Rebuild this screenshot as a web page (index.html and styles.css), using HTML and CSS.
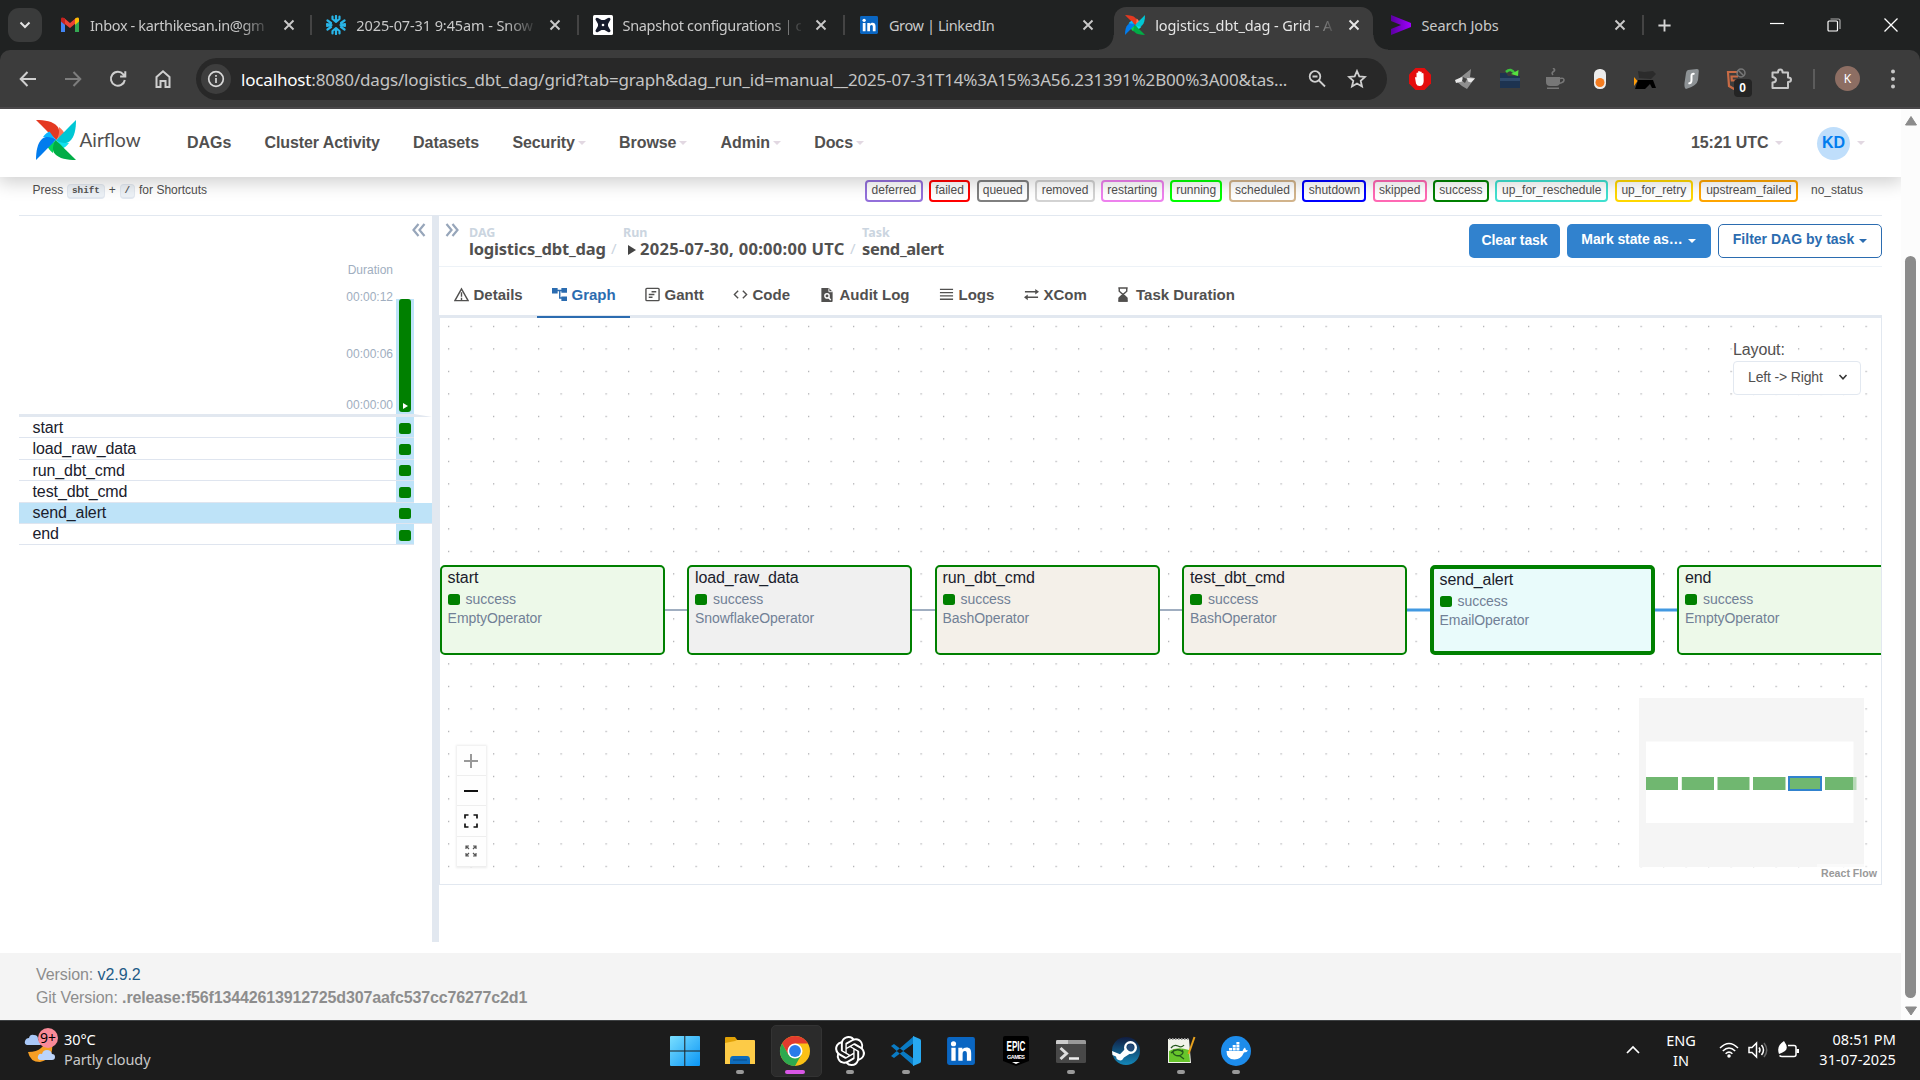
FILE: index.html
```html
<!DOCTYPE html>
<html lang="en">
<head>
<meta charset="utf-8">
<title>logistics_dbt_dag - Grid - Airflow</title>
<link rel="stylesheet" href="styles.css">
</head>
<body>
<svg class="defs" width="0" height="0" aria-hidden="true">
  <symbol id="pinwheel" viewBox="0 0 40 40">
    <g><path fill="#ff7557" d="M20 20L23 7C26 9 28 12 28.500 13.500C25 16 22 18 20 20Z"/><path fill="#e43921" d="M0 0C9 0 17 1.500 21 6C24.500 10 23 15 20.500 20C15 15 8 8 0 0Z"/></g>
    <g transform="rotate(90 20 20)"><path fill="#11e1ee" d="M20 20L23 7C26 9 28 12 28.500 13.500C25 16 22 18 20 20Z"/><path fill="#00c7d4" d="M0 0C9 0 17 1.500 21 6C24.500 10 23 15 20.500 20C15 15 8 8 0 0Z"/></g>
    <g transform="rotate(180 20 20)"><path fill="#04d659" d="M20 20L23 7C26 9 28 12 28.500 13.500C25 16 22 18 20 20Z"/><path fill="#00ad46" d="M0 0C9 0 17 1.500 21 6C24.500 10 23 15 20.500 20C15 15 8 8 0 0Z"/></g>
    <g transform="rotate(270 20 20)"><path fill="#0cb6ff" d="M20 20L23 7C26 9 28 12 28.500 13.500C25 16 22 18 20 20Z"/><path fill="#017cee" d="M0 0C9 0 17 1.500 21 6C24.500 10 23 15 20.500 20C15 15 8 8 0 0Z"/></g>
  </symbol>
  <symbol id="close" viewBox="0 0 20 20"><path d="M5.500 5.500l9 9M14.500 5.500l-9 9" stroke="currentColor" stroke-width="1.900" fill="none"/></symbol>
  <symbol id="linkedin" viewBox="0 0 26 26"><rect width="26" height="26" rx="2" fill="#0a66c2"/><circle cx="6" cy="6.200" r="2.400" fill="#fff"/><path fill="#fff" d="M4 10h4v12H4zM10.500 10h3.800v1.700c.7-1.200 2-2 3.800-2 3.300 0 4.400 2 4.400 5.300v7h-4v-6.300c0-1.600-.4-2.700-1.900-2.700-1.500 0-2.100 1.100-2.100 2.700V22h-4z"/></symbol>
</svg>

<header class="browser">
  <div class="tabstrip">
    <button class="tabsearch"><svg width="12" height="12" viewBox="0 0 12 12"><path d="M1.500 3.500L6 8l4.500-4.500" fill="none" stroke="#e3e3e3" stroke-width="2"/></svg></button>
    <div class="tab">
      <svg class="fav" viewBox="0 0 20 20"><path fill="#4285f4" d="M1 4v13h4V8z"/><path fill="#34a853" d="M19 4v13h-4V8z"/><path fill="#ea4335" d="M1 5l3-2 6 5 6-5 0 5-6 5-9-7z"/><path fill="#c5221f" d="M1 4c0-2 2-2 4-.300V10L1 6.500z"/><path fill="#fbbc04" d="M19 4c0-2-2-2-4-.300V10l4-3.500z"/></svg>
      <span class="title fade tight">Inbox - karthikesan.in@gm</span><svg class="x"><use href="#close"/></svg>
    </div>
    <div class="tab">
      <svg class="fav" viewBox="0 0 20 20" fill="none" stroke="#29b5e8" stroke-width="2.200" stroke-linecap="round" stroke-linejoin="round"><path d="M10 1v4.500M6.500 1.500V4L10 6.800 13.500 4V1.500M10 19v-4.500M6.500 18.500V16l3.500-2.800 3.500 2.800v2.500M1.500 5.500L5 8M1.500 14.500L5 12M18.500 5.500L15 8M18.500 14.500L15 12M1 9.200l4.500.800L1 10.800M19 9.200l-4.500.800 4.500.800"/></svg>
      <span class="title fade">2025-07-31 9:45am - Snow</span><svg class="x"><use href="#close"/></svg>
    </div>
    <div class="tab">
      <svg class="fav" viewBox="0 0 20 20"><rect width="20" height="20" rx="1.500" fill="#fff"/><path fill="#161b2c" d="M2.500 4.500Q2.500 2 5 3l3.500 2h3L15 3q2.500-1 2.500 1.500L15 9v2l2.500 4.500Q17.500 18 15 17l-3.500-2h-3L5 17q-2.500 1-2.500-1.500L5 11V9z"/><circle cx="10" cy="10" r="1.300" fill="#fff"/></svg>
      <span class="title fade tight">Snapshot configurations | c</span><svg class="x"><use href="#close"/></svg>
    </div>
    <div class="tab nosep">
      <svg class="fav sm"><use href="#linkedin"/></svg>
      <span class="title tight">Grow | LinkedIn</span><svg class="x"><use href="#close"/></svg>
    </div>
    <div class="tab active">
      <svg class="fav"><use href="#pinwheel"/></svg>
      <span class="title fade">logistics_dbt_dag - Grid - A</span><svg class="x"><use href="#close"/></svg>
    </div>
    <div class="tab">
      <svg class="fav" viewBox="0 0 20 20"><defs><linearGradient id="acc"><stop offset="0" stop-color="#5a00a0"/><stop offset="1" stop-color="#a100ff"/></linearGradient></defs><path fill="url(#acc)" d="M0 0l20 8v4L0 20v-6l10-4L0 6z"/></svg>
      <span class="title">Search Jobs</span><svg class="x"><use href="#close"/></svg>
    </div>
    <svg class="newtab" viewBox="0 0 16 16"><path d="M8 1.500v13M1.500 8h13" stroke="#d5d5d5" stroke-width="2"/></svg>
    <div class="winctl">
      <svg width="14" height="14"><path d="M0 5.500h14" stroke="#fff" stroke-width="1.200"/></svg>
      <svg width="14" height="14" fill="none" stroke="#fff" stroke-width="1.200"><rect x="1" y="3" width="9.500" height="10" rx="1"/><path d="M3.500 1h8q1.500 0 1.500 1.500V11" stroke="#aaa"/></svg>
      <svg width="14" height="14"><path d="M.500.500l13 13M13.500.500l-13 13" stroke="#fff" stroke-width="1.300"/></svg>
    </div>
  </div>
  <div class="toolbar">
    <div class="navbtns">
      <svg viewBox="0 0 20 20"><path d="M18 10H3M9.500 3L2.700 10l6.800 7"/></svg>
      <svg class="dim" viewBox="0 0 20 20"><path d="M2 10h15M10.500 3l6.800 7-6.800 7"/></svg>
      <svg viewBox="0 0 20 20"><path d="M16.800 11a7 7 0 1 1-1.500-5.700L17 7.300M17.300 2.300v5.200h-5.200"/></svg>
      <svg viewBox="0 0 20 20"><path d="M3.500 8v10h4v-6h5v6h4V8L10 2.300z"/></svg>
    </div>
    <div class="omnibox">
      <span class="info"><svg width="18" height="18" viewBox="0 0 18 18" fill="none" stroke="#d8d8d8" stroke-width="1.700"><circle cx="9" cy="9" r="7.300"/><path d="M9 8v5M9 5v1.700"/></svg></span>
      <span class="url"><b>localhost</b>:8080/dags/logistics_dbt_dag/grid?tab=graph&amp;dag_run_id=manual__2025-07-31T14%3A15%3A56.231391%2B00%3A00&amp;tas...</span>
      <svg class="oi" viewBox="0 0 20 20"><circle cx="8" cy="7.500" r="5.300"/><path d="M12 11.500l6 6M5.500 7.500h5"/></svg>
      <svg class="oi star" viewBox="0 0 20 20"><path d="M10 2l2.300 5.400 5.700.500-4.300 3.900 1.300 5.700L10 14.500 5 17.500l1.300-5.700L2 7.900l5.700-.500z"/></svg>
    </div>
    <div class="exts">
      <svg viewBox="0 0 22 22"><path fill="#e40d0d" d="M6.500 0h9L22 6.500v9L15.500 22h-9L0 15.500v-9z"/><path fill="#fff" d="M6 9.500q1-1 1.500 0V5q.8-1 1.600 0V3.500q.9-1 1.800 0V4q.9-1 1.800 0v1.500q.9-1 1.800 0L14.700 13q-.2 5-4.200 5-2.500 0-3.500-2.500z"/></svg>
      <svg viewBox="0 0 22 22"><path fill="#8f8f8f" d="M2 13L17 1l-1 8 5 1-3 4-5 7-5-3z"/><path fill="#e8e8e8" d="M1 12l7-3 2 4-8 2zM13 10l8 .500-4 4-3-1z"/><path fill="#444" d="M9 9l4 2-2 4-3-2z"/></svg>
      <svg viewBox="0 0 22 22"><path fill="#1d3350" d="M1 5h6l2 3h12v12H1z"/><path fill="#304a6b" d="M1 10h20v3H1z"/><path fill="none" stroke="#3dc43d" stroke-width="2.500" d="M7 4q5-5 9 2"/><path fill="#55e040" d="M12 6l7 2 .500-6z"/></svg>
      <svg viewBox="0 0 22 22"><path fill="#777" d="M2 9h14v5q0 4-4 4H6q-4 0-4-4zM3 19.500h12V21H3z"/><path fill="none" stroke="#777" stroke-width="1.600" d="M16 10.500q4-1 4 1.500t-5 3.500M9 7q-2-2 .500-3.500T9 0"/></svg>
      <svg viewBox="0 0 22 22"><rect x="5" y="1" width="12" height="20" rx="5.500" fill="#ececec"/><circle cx="11" cy="14.500" r="4.500" fill="#f47c20"/></svg>
      <svg viewBox="0 0 22 22"><path fill="#2b2b2b" d="M4 3l6 1 9-1 3 3-5 5-12-1z"/><path fill="#000" d="M4 12h15l3 8h-4l-2-4-5 5H1z"/><path fill="#ff9d0a" d="M0 9l3.500 4L0 18z"/></svg>
      <svg viewBox="0 0 22 22"><path fill="#8d9295" d="M8 2l9-1q2 0 1.800 2L18 12q-1 6-12 9-2-1-1.500-6L6 5q.4-2.500 2-3z"/><path fill="none" stroke="#fff" stroke-width="2" d="M14.500 6q-3-1-3 2v4q0 4-3 3"/></svg>
      <span class="counter"><svg viewBox="0 0 22 22"><path fill="none" stroke="#c86b45" stroke-width="2.200" d="M13 4H3l1 14 5 3 3-1M13 8.500H6.500l.300 4H12"/><circle cx="16" cy="5" r="4" fill="none" stroke="#777" stroke-width="1.500"/><path d="M13 2l6 6" stroke="#777" stroke-width="1.500"/></svg><i>0</i></span>
      <svg viewBox="0 0 22 22"><path fill="none" stroke="#c7c7c7" stroke-width="2" stroke-linejoin="round" d="M2.500 4.500H8q0-3 2.300-3t2.300 3h5.400v5q3 0 3 2.300t-3 2.300V20H2.500v-5.500q3.500-.500 3.500-2.600T2.500 9z"/></svg>
      <hr>
      <span class="avatar">K</span>
      <svg class="dots" viewBox="0 0 22 22" fill="#c7c7c7"><circle cx="11" cy="3.500" r="2"/><circle cx="11" cy="11" r="2"/><circle cx="11" cy="18.500" r="2"/></svg>
    </div>
  </div>
</header>

<div class="viewport">
<div class="page">
  <nav class="navbar">
    <svg class="brand-icon"><use href="#pinwheel"/></svg><span class="brand">Airflow</span>
    <a>DAGs</a><a>Cluster Activity</a><a>Datasets</a><a class="dd">Security</a><a class="dd">Browse</a><a class="dd">Admin</a><a class="dd">Docs</a>
    <a class="dd wide clock">15:21 UTC</a><a class="dd wide user"><span>KD</span></a>
  </nav>
  <div class="legend">
    <div class="keys">Press <kbd>shift</kbd> + <kbd>/</kbd> for Shortcuts</div>
    <span class="st deferred">deferred</span><span class="st failed">failed</span><span class="st queued">queued</span><span class="st removed">removed</span><span class="st restarting">restarting</span><span class="st running">running</span><span class="st scheduled">scheduled</span><span class="st shutdown">shutdown</span><span class="st skipped">skipped</span><span class="st success">success</span><span class="st resched">up_for_reschedule</span><span class="st retry">up_for_retry</span><span class="st upstream">upstream_failed</span><span class="st none">no_status</span>
  </div>
  <main>
    <section class="grid">
      <div class="chart">
        <div class="axis"><span>Duration</span><span>00:00:12</span><span>00:00:06</span><span>00:00:00</span></div>
        <div class="run"><div class="bar"><svg width="5" height="6"><path d="M0 0l5 3-5 3z" fill="#fff"/></svg></div></div>
        <svg class="chev" viewBox="0 0 14 14"><path d="M6.500 1L1.500 7l5 6M12.500 1l-5 6 5 6"/></svg>
      </div>
      <svg class="rule" viewBox="0 0 413 3" preserveAspectRatio="none"><path d="M0 0h395l18 3H0z" fill="#e2e8f0"/></svg>
      <div class="task"><span>start</span><i></i></div>
      <div class="task"><span>load_raw_data</span><i></i></div>
      <div class="task"><span>run_dbt_cmd</span><i></i></div>
      <div class="task"><span>test_dbt_cmd</span><i></i></div>
      <div class="task sel"><span>send_alert</span><i></i></div>
      <div class="task last"><span>end</span><i></i></div>
    </section>
    <div class="divider"></div>
    <section class="details">
      <div class="crumbs">
        <svg class="chev" viewBox="0 0 14 14"><path d="M1.500 1l5 6-5 6M7.500 1l5 6-5 6"/></svg>
        <div class="crumb c1"><small>DAG</small><b>logistics_dbt_dag</b></div><em>/</em>
        <div class="crumb c2"><small>Run</small><b><svg width="8" height="10"><path d="M0 0l8 5-8 5z" fill="#444"/></svg>2025-07-30, 00:00:00 UTC</b></div><em>/</em>
        <div class="crumb c3"><small>Task</small><b>send_alert</b></div>
        <div class="actions"><button class="clear">Clear task</button><button class="mark">Mark state as…<s></s></button><button class="filter">Filter DAG by task<s></s></button></div>
      </div>
      <div class="tabs">
        <a class="w1"><svg viewBox="0 0 16 16"><path d="M8 2L1 14.500h14zM8 5.500v5M8 11.500v3"/></svg>Details</a>
        <a class="w2 on"><svg viewBox="0 0 16 16"><path fill="currentColor" stroke="none" d="M0 1h6v6H0zM10 1h6v5h-6zM10 10h6v5h-6zM6 3h4v1.500H6zM7.500 4h1.500v7h-1.500zM7.500 11H10v1.500H7.500z"/></svg>Graph</a>
        <a class="w3"><svg viewBox="0 0 16 16"><rect x="1" y="1.500" width="14" height="13" rx="1"/><path d="M7 5h5M4 8h6M4 11h4"/></svg>Gantt</a>
        <a class="w4"><svg viewBox="0 0 16 16"><path d="M5.500 4l-4 4 4 4M10.500 4l4 4-4 4"/></svg>Code</a>
        <a class="w5"><svg viewBox="0 0 14 16"><path fill="currentColor" stroke="none" d="M1 1h8l4 4v10q0 1-1 1H1z"/><circle cx="7" cy="9.500" r="2.300" stroke="#fff"/><path d="M8.500 11l2.500 3" stroke="#fff"/><path d="M9 1.500V5h4" stroke="#fff" stroke-width="1"/></svg>Audit Log</a>
        <a class="w6"><svg viewBox="0 0 16 16"><path d="M1 2.500h14M1 6h14M1 9.500h14M1 13h14"/></svg>Logs</a>
        <a class="w7"><svg viewBox="0 0 16 16"><path d="M1 5h12M3 11h12"/><path fill="currentColor" stroke="none" d="M12 2l4 3-4 3zM4 8l-4 3 4 3z"/></svg>XCom</a>
        <a class="w8"><svg viewBox="0 0 12 16"><path d="M1 1h10M1 15h10M2 1v3.500L6 8l4-3.500V1M2 15v-3.500L6 8l4 3.500V15"/><path fill="currentColor" d="M6 8l4 4v3H2v-3z"/></svg>Task Duration</a>
      </div>
      <div class="canvas">
        <svg class="dotsbg" width="1441" height="565"><defs><pattern id="dp" x="8" y="7.800" width="22.500" height="22.500" patternUnits="userSpaceOnUse"><circle cx=".700" cy=".700" r=".620" fill="#8a8a8f"/></pattern></defs><rect width="1441" height="565" fill="url(#dp)"/></svg>
        <svg class="edges" width="1441" height="565" fill="none" stroke="#a0aec0" stroke-width="2"><path d="M224 292h24M472 292h24M719 292h24"/><path d="M966 292h25M1214 292h24" stroke="#4299e1" stroke-width="3.200"/></svg>
        <div class="node n1"><h4>start</h4><p>success</p><span>EmptyOperator</span></div>
        <div class="node n2"><h4>load_raw_data</h4><p>success</p><span>SnowflakeOperator</span></div>
        <div class="node n3"><h4>run_dbt_cmd</h4><p>success</p><span>BashOperator</span></div>
        <div class="node n4"><h4>test_dbt_cmd</h4><p>success</p><span>BashOperator</span></div>
        <div class="node n5"><h4>send_alert</h4><p>success</p><span>EmailOperator</span></div>
        <div class="node n6"><h4>end</h4><p>success</p><span>EmptyOperator</span></div>
        <div class="layout"><label>Layout:</label><div class="select">Left -&gt; Right<svg width="10" height="10"><path d="M1.500 3L5 6.800 8.500 3" fill="none" stroke="#333" stroke-width="1.500"/></svg></div></div>
        <div class="controls">
          <button><svg viewBox="0 0 14 14"><path d="M7 0v14M0 7h14" stroke="#999" stroke-width="2"/></svg></button>
          <button><svg viewBox="0 0 14 14"><path d="M0 7h14" stroke="#111" stroke-width="2"/></svg></button>
          <button><svg viewBox="0 0 14 14"><path d="M1 4.500V1h3.500M9.500 1H13v3.500M13 9.500V13H9.500M4.500 13H1V9.500" fill="none" stroke="#111" stroke-width="1.700"/></svg></button>
          <button><svg viewBox="0 0 14 14"><path d="M2 2l3 3M12 2L9 5M2 12l3-3M12 12L9 9M2 5V2h3M9 2h3v3M12 9v3H9M5 12H2V9" fill="none" stroke="#555" stroke-width="1.200"/></svg></button>
        </div>
        <svg class="minimap" width="225" height="169"><rect width="225" height="169" fill="#f5f5f5"/><rect x="7" y="43.500" width="207.500" height="81.500" fill="#fff"/><g fill="#70b770"><rect x="7" y="79" width="32" height="13"/><rect x="42.800" y="79" width="32.200" height="13"/><rect x="78.500" y="79" width="32" height="13"/><rect x="114" y="79" width="32.500" height="13"/><rect x="150" y="79" width="32" height="13" stroke="#3182ce" stroke-width="2"/><rect x="186" y="79" width="28.500" height="13"/></g><rect x="214.500" y="79" width="3" height="13" fill="#b8d9b8"/></svg>
        <span class="attrib">React Flow</span>
      </div>
    </section>
  </main>
  <footer><div>Version: <a>v2.9.2</a></div><div>Git Version: <b>.release:f56f13442613912725d307aafc537cc76277c2d1</b></div></footer>
</div>
<div class="scroll"><svg width="12" height="10"><path d="M6 .500L11.500 9H.500z" fill="#8b8b8b" stroke="#8b8b8b" stroke-linejoin="round"/></svg><div class="thumb"></div><svg width="12" height="10"><path d="M6 9L11.500 1H.500z" fill="#8b8b8b" stroke="#8b8b8b" stroke-linejoin="round"/></svg></div>
</div>

<div class="taskbar">
  <div class="weather">
    <svg width="36" height="36" viewBox="0 0 36 36"><path fill="#f59e24" d="M4 24q9 0 13-4t5-5h6q2 16-12 19Q6 34 4 24z"/><path fill="#a9c8f7" d="M3 17q-3-1-2-4t4-3q1-4 5-3 4 0 4 4l3 6z"/><path fill="#bcd4fa" d="M16 32q-3-1-2-4t4-2q1-4 5-4t5 4q3 0 3 3t-3 3z"/><circle cx="24" cy="10" r="10" fill="#f98a98"/><text x="24" y="15" text-anchor="middle" font-family="Noto Sans" font-size="14">9+</text></svg>
    <div>30°C<br><span>Partly cloudy</span></div>
  </div>
  <div class="apps">
    <div><svg viewBox="0 0 30 30"><defs><linearGradient id="win" x1="0" y1="0" x2="1" y2="1"><stop offset="0" stop-color="#7adfff"/><stop offset="1" stop-color="#0a95f5"/></linearGradient></defs><path fill="url(#win)" d="M1 0h13.300v14.500H0V1q0-1 1-1zM15.300 0H29q1 0 1 1v13.500H15.300zM0 15.500h14.300V30H1q-1 0-1-1zM15.300 15.500H30V29q0 1-1 1H15.300z"/></svg></div>
    <div class="run"><svg viewBox="0 0 30 30"><path fill="#e0a106" d="M0 2q0-1 1-1h9l3 4v4H0z"/><path fill="#fdcb47" d="M0 7l10-2 2-1h17q1 0 1 1v23H0z"/><path fill="#0e6cbd" d="M5 28v-4q0-4 3-4h14q3 0 3 4v4z"/><path stroke="#0b4a86" d="M8 24h14"/></svg></div>
    <div class="run cur"><svg viewBox="0 0 30 30"><circle cx="15" cy="15" r="15" fill="#fbc116"/><path fill="#e33b2e" d="M2 7.500A15 15 0 0 1 28 7.500H15L8.500 19z"/><path fill="#2da94f" d="M2 7.500A15 15 0 0 0 15 30l6.500-11.500L15 22 8.500 18.700z"/><circle cx="15" cy="15" r="7.500" fill="#fff"/><circle cx="15" cy="15" r="5.900" fill="#2a7bea"/></svg></div>
    <div class="run"><svg viewBox="0 0 24 24"><path fill="#fff" d="M22.282 9.821a5.985 5.985 0 0 0-.516-4.910 6.046 6.046 0 0 0-6.510-2.900A6.065 6.065 0 0 0 4.981 4.182a5.985 5.985 0 0 0-3.998 2.900 6.046 6.046 0 0 0 .743 7.097 5.980 5.980 0 0 0 .510 4.911 6.051 6.051 0 0 0 6.515 2.900A5.985 5.985 0 0 0 13.260 24a6.056 6.056 0 0 0 5.772-4.206 5.990 5.990 0 0 0 3.998-2.900 6.056 6.056 0 0 0-.748-7.073zM13.260 22.430a4.476 4.476 0 0 1-2.876-1.040l.141-.081 4.779-2.758a.795.795 0 0 0 .393-.681v-6.737l2.020 1.169a.071.071 0 0 1 .038.052v5.583a4.504 4.504 0 0 1-4.495 4.494zM3.600 18.304a4.471 4.471 0 0 1-.535-3.014l.142.085 4.783 2.759a.771.771 0 0 0 .780 0l5.843-3.369v2.332a.080.080 0 0 1-.033.062L9.740 19.950a4.500 4.500 0 0 1-6.140-1.646zM2.341 7.896a4.485 4.485 0 0 1 2.366-1.973V11.600a.766.766 0 0 0 .388.677l5.815 3.355-2.020 1.169a.076.076 0 0 1-.071 0l-4.830-2.787A4.504 4.504 0 0 1 2.341 7.872zm16.597 3.855l-5.833-3.387L15.119 7.200a.076.076 0 0 1 .071 0l4.830 2.791a4.494 4.494 0 0 1-.676 8.105v-5.678a.790.790 0 0 0-.407-.667zm2.010-3.023l-.141-.085-4.774-2.782a.776.776 0 0 0-.785 0L9.409 9.230V6.897a.066.066 0 0 1 .028-.061l4.830-2.787a4.500 4.500 0 0 1 6.680 4.660zm-12.640 4.135l-2.020-1.164a.080.080 0 0 1-.038-.057V6.075a4.500 4.500 0 0 1 7.375-3.453l-.142.080L8.704 5.460a.795.795 0 0 0-.393.681zm1.097-2.365l2.602-1.500 2.607 1.500v2.999l-2.597 1.500-2.607-1.500z"/></svg></div>
    <div class="run"><svg viewBox="0 0 30 30"><path fill="#0a7bc4" d="M0 10l3-2 20 15v7zM0 20l3 2L23 7V0z"/><path fill="#28a9f1" d="M22 0l7 3q1 .500 1 2v20q0 1.500-1 2l-7 3z"/><path fill="#1c1c1c" d="M22 8.500v13L13 15z"/></svg></div>
    <div><svg viewBox="-1 -1 28 28"><use href="#linkedin" width="26" height="26"/></svg></div>
    <div><svg viewBox="0 0 30 30"><path fill="#000" d="M4 0h22q2 0 2 2v23l-13 5-13-5V2q0-2 2-2z"/><g fill="#fff" font-family="Liberation Sans" font-weight="700" text-anchor="middle"><text x="15" y="15" font-size="15" textLength="19" lengthAdjust="spacingAndGlyphs">EPIC</text><text x="15" y="22.500" font-size="5.500" textLength="18">GAMES</text></g><path fill="#fff" d="M11 26h8l-4 2z"/></svg></div>
    <div class="run"><svg viewBox="0 0 30 30"><rect y="4" width="30" height="23" rx="1.500" fill="#484848"/><path fill="#999" d="M0 8V5.500Q0 4 1.500 4h27Q30 4 30 5.500V8z"/><path fill="#ccc" d="M0 8V5.500Q0 4 1.500 4H12v4z"/><path fill="none" stroke="#ddd" stroke-width="3" d="M4.500 12l6 5.500-6 5.500"/><path stroke="#eee" stroke-width="2.500" d="M13 22.500h10"/></svg></div>
    <div><svg viewBox="0 0 30 30"><defs><linearGradient id="stm" x2="0" y2="1"><stop offset="0" stop-color="#101c40"/><stop offset="1" stop-color="#1387b8"/></linearGradient></defs><circle cx="15" cy="15" r="14" fill="url(#stm)"/><circle cx="19.500" cy="11.500" r="5.300" fill="none" stroke="#fff" stroke-width="2.400"/><path fill="#fff" d="M1 15l8 3.300L15 12l5 5-7 4.500q-2 4-5.500 2.500Q5 23 5 20.500L1.500 19z"/><circle cx="19.500" cy="11.500" r="3.200" fill="#244a78"/></svg></div>
    <div class="run"><svg viewBox="0 0 30 30"><path fill="#f1f3ea" d="M2 3h21l2 24H2z"/><path fill="#67c52b" d="M3 15q8-5 20-1l1 12H3z"/><path stroke="#999" stroke-width="2" stroke-dasharray="1.500 1.500" d="M3 3h20"/><path fill="none" stroke="#24581b" stroke-width="1.300" d="M5 12q3-4 7-2t6-1M5 17q6-6 12-1M8 14a5 3.500 0 1 0 8 0M14 20l4 3"/><path stroke="#e8a21e" stroke-width="2" d="M28.500 1l-6 17"/></svg></div>
    <div class="run"><svg viewBox="0 0 30 30"><circle cx="15" cy="15" r="15" fill="#1d8ceb"/><path fill="#fff" d="M5.500 15h16q1-3 2.500-3.500l1 2.500 2 .500q-1 2-4 2-3 7-9.500 7-8 0-8-8.500zM8 12h3v2.500H8zM11.700 12h3v2.500h-3zM15.400 12h3v2.500h-3zM11.700 9h3v2.400h-3zM15.400 9h3v2.400h-3zM15.400 6h3v2.400h-3z"/></svg></div>
  </div>
  <div class="tray">
    <svg class="up" width="14" height="10" viewBox="0 0 14 10"><path d="M1 8l6-6 6 6" fill="none" stroke="#fff" stroke-width="1.700"/></svg>
    <div class="lang">ENG<br>IN</div>
    <svg class="wifi" width="20" height="16" viewBox="0 0 20 16" fill="none" stroke="#fff" stroke-width="1.500"><path d="M1 6q9-9 18 0M3.800 9q6.200-6 12.400 0M6.600 11.800q3.400-3.300 6.800 0"/><circle cx="10" cy="14" r="1" fill="#fff"/></svg>
    <svg class="vol" width="20" height="18" viewBox="0 0 20 18" fill="none" stroke="#fff" stroke-width="1.500"><path d="M1 6.500h3L8.500 2v14L4 11.500H1zM11 6.500q2 2.500 0 5M13.500 4q4 5 0 10"/><path d="M16 2q5.500 7 0 14" stroke="#666"/></svg>
    <svg class="bat" width="21" height="18" viewBox="0 0 21 18"><path fill="none" stroke="#fff" stroke-width="1.500" d="M10 4.500h6q2 0 2 2v7q0 2-2 2H4q-1.500 0-2.500-1"/><path fill="#fff" d="M18.500 8H21v4h-2.500zM1 13Q-2 5 6 0q5 7 1 10-3 2-6 3z"/></svg>
    <div class="time">08:51 PM<br>31-07-2025</div>
  </div>
</div>
</body>
</html>
```
FILE: styles.css
```css
* { box-sizing: border-box; }
body { margin: 0; width: 1920px; height: 1080px; overflow: hidden; display: flex; flex-direction: column; background: #fff; color: #51504f; font-family: "Liberation Sans", Arial, sans-serif; }
svg { display: block; flex: none; }
.defs { position: absolute; }
button { font-family: inherit; padding: 0; border: 0; margin: 0; }

/* Browser frame */
.browser { flex: none; height: 109px; background: #202222; font-family: "Noto Sans", sans-serif; }
.tabstrip { height: 50px; display: flex; align-items: center; padding-left: 8px; }
.tabsearch { width: 34px; height: 34px; margin-right: 4px; border-radius: 11px; background: #3a3b3b; display: flex; align-items: center; justify-content: center; }
.tab { position: relative; width: 266.300px; height: 50px; display: flex; align-items: center; padding: 0 13.500px 0 14px; color: #c9c9c9; font-size: 14.500px; letter-spacing: -.1px; }
.tab::after { content: ""; position: absolute; right: 0; top: 15px; width: 2px; height: 20px; background: #444; }
.tab.nosep::after { display: none; }
.tab .fav { width: 20px; height: 20px; margin-right: 10px; z-index: 1; }
.tab .fav.sm { width: 18px; height: 18px; margin: 0 11px 0 1px; }
.tab .title { flex: 1; min-width: 0; overflow: hidden; white-space: nowrap; line-height: 24px; margin-top: -1px; z-index: 1; }
.tab .tight { letter-spacing: -.35px; }
.tab .fade { -webkit-mask-image: linear-gradient(90deg, #000 150px, transparent 182px); mask-image: linear-gradient(90deg, #000 150px, transparent 182px); }
.tab .x { width: 20px; height: 20px; margin-left: 10px; z-index: 1; }
.tab.active { color: #e6e6e6; }
.tab.active::before { content: ""; position: absolute; left: 3px; right: 4px; top: 7px; bottom: 0; border-radius: 12px 12px 0 0; background: #3c3c3c; }
.tab.active::after { left: -12px; right: -11px; top: 35px; width: auto; height: 15px; background: radial-gradient(circle at 0 0, transparent 14px, #3c3c3c 15px) left/15px 15px no-repeat, radial-gradient(circle at 100% 0, transparent 14px, #3c3c3c 15px) right/15px 15px no-repeat; }
.newtab { width: 15px; height: 15px; margin-left: 13px; }
.winctl { margin-left: auto; margin-right: 22px; display: flex; gap: 43px; }
.toolbar { height: 59px; background: #3c3c3c; border-radius: 10px 10px 0 0; border-bottom: 2px solid #4a484a; display: flex; align-items: center; }
.navbtns { display: flex; gap: 25px; padding-left: 17.500px; width: 196px; }
.navbtns svg { width: 20px; height: 20px; fill: none; stroke: #cfcfcf; stroke-width: 2; }
.navbtns .dim { stroke: #7d7d7d; }
.omnibox { width: 1191px; height: 42px; border-radius: 21px; background: #282828; display: flex; align-items: center; padding-left: 5px; }
.info { width: 30px; height: 30px; border-radius: 50%; background: #3e3e3e; display: flex; align-items: center; justify-content: center; margin-right: 10px; }
.url { width: 1066px; padding-top: 1px; white-space: nowrap; color: #c4c4c4; font-size: 17px; letter-spacing: -.17px; }
.url b { font-weight: 400; color: #fff; }
.oi { width: 20px; height: 20px; fill: none; stroke: #cfcfcf; stroke-width: 1.800; }
.oi.star { margin-left: 20px; }
.exts { display: flex; align-items: center; padding-left: 22px; }
.exts svg { width: 22px; height: 22px; }
.exts > * { margin-right: 23.100px; flex: none; }
.counter { position: relative; width: 22px; }
.counter i { position: absolute; left: 9px; top: 11px; width: 18px; height: 18px; border-radius: 4px; background: #242424; color: #fff; font: 700 12px/19px "Liberation Sans", sans-serif; text-align: center; }
.exts hr { width: 2px; height: 20px; border: 0; background: #5c5c5c; margin: 0 20px 0 -2px; }
.avatar { width: 25px; height: 25px; border-radius: 50%; background: #8d6e63; color: #fff; font-size: 12px; line-height: 25px; text-align: center; }
.exts .avatar { margin-right: 22px; }
.exts .dots { margin-right: 0; }

/* Web page */
.viewport { flex: 1; min-height: 0; display: flex; }
.page { width: 1901px; display: flex; flex-direction: column; }
.navbar { flex: none; position: relative; height: 68px; display: flex; align-items: center; padding-left: 36px; background: #fff; box-shadow: 0 3px 18px 2px rgba(0,0,0,.2); clip-path: inset(0 0 -30px 0); font-size: 16px; font-weight: 700; letter-spacing: -.08px; }
.brand-icon { width: 40px; height: 40px; margin-top: -6px; }
.brand { width: 94.500px; padding-left: 3.500px; font: 400 19px/24px "Lato", sans-serif; letter-spacing: 0; margin-top: -6px; }
.navbar a { padding: 0 16.600px; white-space: nowrap; display: flex; align-items: center; }
.dd::after { content: ""; margin-left: 3px; border: 4px solid transparent; border-top-color: #e2d8e2; border-bottom: 0; }
.wide::after { margin-left: 7px; }
.navbar .clock { margin-left: auto; padding-right: 17px; }
.navbar .user { padding-right: 36px; }
.user span { width: 33px; height: 33px; border-radius: 50%; background: #bfdefb; color: #017cee; line-height: 32px; text-align: center; }
.legend { flex: none; height: 38px; padding: 3px 20px 0 32.500px; display: flex; gap: 6.400px; align-items: flex-start; font-size: 12px; }
.keys { margin-right: auto; line-height: 20px; }
kbd { display: inline-block; height: 15px; padding: 0 4px; margin: 0 .500px; border: 1px solid #e2e8f0; border-bottom-width: 2px; border-radius: 4px; background: #edf2f7; font: 700 9.300px/12px "Liberation Mono", monospace; vertical-align: 1px; }
.st { height: 22px; border: 2px solid; border-radius: 4px; padding: 0 4.250px; line-height: 16px; }
.deferred { border-color: mediumpurple; } .failed { border-color: red; } .queued { border-color: gray; } .removed { border-color: lightgrey; } .restarting { border-color: violet; } .running { border-color: lime; } .scheduled { border-color: tan; } .shutdown { border-color: blue; } .skipped { border-color: hotpink; } .success { border-color: green; } .resched { border-color: turquoise; } .retry { border-color: gold; } .upstream { border-color: orange; }
.st.resched, .st.retry, .st.upstream { padding: 0 4.800px; }
.st.none { border-color: transparent; padding-right: 16px; }
main { flex: none; height: 727px; margin: 0 19px 11px 19px; border-top: 1px solid #e2e8f0; display: flex; }
.grid { width: 413px; color: #1a202c; }
.chart { height: 198px; display: flex; }
.axis { width: 374px; padding-top: 44px; display: flex; flex-direction: column; text-align: right; font-size: 12px; line-height: 20px; color: #a0aec0; }
.axis span:nth-child(2) { margin-top: 7px; }
.axis span:nth-child(3) { margin-top: 37px; }
.axis span:nth-child(4) { margin-top: 31px; }
.chart .run { width: 18px; height: 115px; margin: 83px 0 0 3px; padding: 0 3px 2px; background: #bee3f8; }
.bar { height: 113px; background: green; border-radius: 3px; padding: 104px 0 0 4px; }
.chev { width: 14px; height: 14px; fill: none; stroke: #97a6ba; stroke-width: 2.200; }
.chart .chev { margin: 7px 0 0 -2px; }
.rule { width: 413px; height: 3px; }
.task { width: 395px; height: 21.400px; border-bottom: 1px solid #dfe5ef; display: flex; align-items: stretch; padding-left: 13.500px; font-size: 16px; letter-spacing: -.1px; line-height: 21px; }
.task.sel, .task.last { line-height: 20.500px; }
.task span { flex: 1; }
.task i { width: 18px; background: #bee3f8; display: flex; align-items: center; justify-content: center; padding-top: 2px; }
.task i::after { content: ""; width: 12px; height: 11px; border-radius: 2.500px; background: green; }
.task.sel { width: 413px; background: #bee3f8; }
.task.sel i { margin-right: 18px; }
.divider { width: 7px; background: #e2e8f0; }
.details { width: 1443px; }
.crumbs { height: 51px; display: flex; border-bottom: 1px solid #edf2f7; font-family: "Noto Sans", sans-serif; }
.crumbs .chev { margin: 7px 10px 0 6px; }
.crumb { display: flex; flex-direction: column; padding-top: 9px; white-space: nowrap; }
.crumb small { font-size: 12.500px; line-height: 16px; font-weight: 700; color: #cbd5e0; }
.crumb b { display: flex; align-items: center; margin-top: -1px; font-size: 16.500px; line-height: 17px; letter-spacing: -.2px; }
.crumb b svg { margin: 2px 4px 0 5px; }
.crumb.c1 { width: 136px; } .crumb.c2 { width: 221px; }
.crumb.c2 b { letter-spacing: .3px; } .crumb.c3 b { letter-spacing: -.35px; }
.crumbs em { width: 18px; padding: 23px 0 0 6px; font-size: 15px; line-height: 18px; font-style: normal; color: #cbd5e0; }
.actions { margin-left: auto; display: flex; gap: 7px; padding-top: 8px; font-family: "Liberation Sans", sans-serif; }
.actions button { height: 34px; border-radius: 5px; background: #3182ce; color: #fff; font-size: 14px; font-weight: 700; display: flex; align-items: center; justify-content: center; padding-bottom: 2px; }
.actions .clear { width: 91px; letter-spacing: -.1px; }
.actions .mark { width: 144px; padding-bottom: 4px; padding-right: 1px; letter-spacing: -.1px; }
.actions .filter { width: 164px; padding-bottom: 4px; background: #fff; border: 1px solid #2b6cb0; color: #2b6cb0; }
.actions s { margin: 4px 0 0 5px; border: 4px solid transparent; border-top-color: currentColor; border-bottom: 0; }
.tabs { height: 51px; border-bottom: 3px solid #e2e8f0; display: flex; font-size: 15px; font-weight: 700; }
.tabs a { height: 51px; display: flex; align-items: center; gap: 5px; padding: 4px 0 0 14.500px; white-space: nowrap; }
.tabs svg { width: 15px; height: 15px; fill: none; stroke: currentColor; stroke-width: 1.500; }
.w1 { width: 98px; } .w2 { width: 93px; } .w3 { width: 88px; } .w4 { width: 87px; } .w5 { width: 119px; } .w6 { width: 85px; } .w7 { width: 93.500px; }
.tabs .w5 svg { width: 14px; margin-right: 1px; } .tabs .w8 svg { width: 12px; margin-right: 2px; }
.tabs .on { color: #2b6cb0; border-bottom: 2px solid #2b6cb0; padding-top: 6px; }

/* Graph canvas */
.canvas { position: relative; height: 567px; border: 1px solid #e2e8f0; border-top: 0; overflow: hidden; }
.dotsbg, .edges { position: absolute; left: 0; top: 0; }
.node { position: absolute; top: 247px; width: 225px; height: 90px; border: 2px solid green; border-radius: 5px; padding: 0 6px; color: #718096; font-size: 14px; letter-spacing: -.05px; }
.node h4 { margin: 0; font-weight: 400; font-size: 16px; line-height: 22px; letter-spacing: -.1px; color: #1a202c; }
.node p { margin: 2px 0 0; line-height: 17px; display: flex; align-items: center; gap: 6px; }
.node p::before { content: ""; width: 12px; height: 11px; border-radius: 2.500px; background: green; }
.node span { display: block; line-height: 20px; }
.n1 { left: -.4px; background: #edf9e9; } .n2 { left: 247px; background: #f0f0f0; } .n3 { left: 494.500px; background: #f4f0e9; } .n4 { left: 742px; background: #f4f0e9; } .n5 { left: 989.500px; background: #e9fbfb; border-width: 4px; } .n6 { left: 1237px; background: #edf9e9; }
.layout { position: absolute; left: 1293px; top: 21px; width: 128px; font-size: 16px; line-height: 22px; letter-spacing: -.1px; }
.layout label { display: block; }
.select { height: 34px; border: 1px solid #e2e8f0; border-radius: 4px; background: #fff; display: flex; align-items: center; justify-content: space-between; padding: 0 12px 2px 14px; font-size: 14px; letter-spacing: -.15px; }
.controls { position: absolute; left: 16.500px; top: 428px; width: 29px; display: flex; flex-direction: column; box-shadow: 0 0 2px 1px rgba(0,0,0,.08); }
.controls button { height: 30.200px; background: #fefefe; border-bottom: 1px solid #eee; display: flex; align-items: center; justify-content: center; }
.controls svg { width: 14px; height: 14px; }
.minimap { position: absolute; left: 1199px; top: 380px; }
.attrib { position: absolute; right: 0; bottom: 0; padding: 3px 4px 4px; font-size: 10.600px; line-height: 13px; font-weight: 700; color: #999; background: rgba(255,255,255,.5); }
footer { flex: 1; background: #f4f4f4; padding: 10px 36px 0; font-size: 16px; line-height: 23px; letter-spacing: -.08px; color: #8d8d8d; }
footer a { color: #1f5b87; }
footer b { letter-spacing: -.14px; }
.scroll { width: 19px; background: #fcfcfc; display: flex; flex-direction: column; align-items: center; padding: 7px 0 3px; }
.thumb { width: 11px; height: 742px; margin: 130px 0 8px; border-radius: 6px; background: #8b8b8b; }

/* Taskbar */
.taskbar { flex: none; height: 60px; background: #1c1c1c; border-top: 1px solid #3e4143; display: grid; grid-template-columns: 657.500px 1fr 320px; color: #fff; font: 14.500px/20px "Noto Sans", sans-serif; }
.weather { display: flex; padding: 7px 0 0 24px; gap: 4px; letter-spacing: -.1px; }
.weather div { padding-top: 1px; }
.weather span { color: #c8c8c8; }
.apps { display: flex; }
.apps div { position: relative; width: 55.150px; height: 59px; display: flex; justify-content: center; align-items: center; }
.apps svg { width: 30px; height: 30px; z-index: 1; overflow: visible; }
.apps .run::after { content: ""; position: absolute; bottom: 6px; width: 8px; height: 4px; border-radius: 2px; background: #999; z-index: 1; }
.apps .cur::before { content: ""; position: absolute; left: 3px; top: 4px; width: 49px; height: 50px; border-radius: 5px; background: #2b2b2b; border: 1px solid #333; }
.apps .cur::after { width: 20px; background: #d957e6; }
.tray { display: flex; align-items: center; justify-content: flex-end; padding: 0 24px 2px 0; }
.lang { text-align: center; width: 32px; margin: 0 21.500px 0 25px; }
.wifi { margin-right: 9px; } .vol { margin-right: 10px; }
.time { text-align: right; width: 97.500px; padding-bottom: 1px; letter-spacing: .1px; }
```
